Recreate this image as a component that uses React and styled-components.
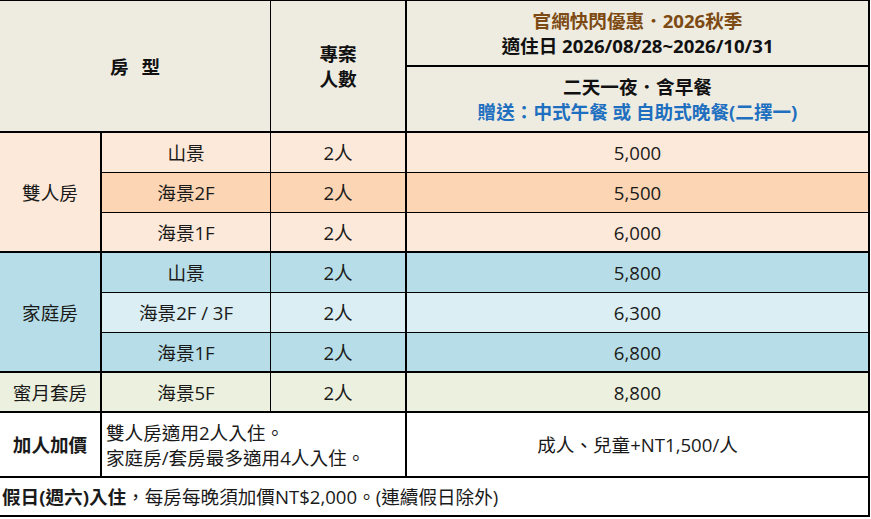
import React from "react";
import styled, { createGlobalStyle } from "styled-components";

const Global = createGlobalStyle`
  html, body { margin: 0; padding: 0; background: #fff; }
  body {
    font-family: "Open Sans", "Noto Sans CJK TC", sans-serif;
    color: #1a1a1a;
  }
`;

const C = {
  head: "#EEECE1",
  peach: "#FDE9D9",
  peachDark: "#FCD5B4",
  blue: "#B7DEE8",
  blueLight: "#DAEEF3",
  olive: "#EBF1DE",
  white: "#FFFFFF",
};

const Grid = styled.div`
  display: grid;
  grid-template-columns: 102px 169px 136px 463px;
  grid-template-rows: 66px 66px repeat(7, 40px) 65px 39px;
  width: 870px;
  border-top: 1px solid #000;
`;

const Cell = styled.div`
  box-sizing: border-box;
  display: flex;
  flex-direction: column;
  justify-content: center;
  align-items: ${(p) => (p.$left ? "flex-start" : "center")};
  text-align: ${(p) => (p.$left ? "left" : "center")};
  padding: 0 0 0 ${(p) => p.$pl || 0}px;
  background: ${(p) => p.$bg || C.white};
  border-right: ${(p) => p.$r ?? 2}px solid #000;
  border-bottom: ${(p) => p.$b ?? 1}px solid #000;
  grid-column: span ${(p) => p.$cs || 1};
  grid-row: span ${(p) => p.$rs || 1};
  font-size: 18.6px;
  line-height: 25px;
  font-weight: ${(p) => (p.$bold ? 700 : 400)};
  white-space: nowrap;
`;

const HeadTitle = styled.span`
  color: ${(p) => p.$color || "#111"};
  font-weight: 700;
  word-spacing: ${(p) => p.$ws || "normal"};
`;

const Bold = styled.span`
  font-weight: 700;
`;

const groups = [
  {
    name: "雙人房",
    rows: [
      { view: "山景", price: "5,000", bg: C.peach },
      { view: "海景2F", price: "5,500", bg: C.peachDark },
      { view: "海景1F", price: "6,000", bg: C.peach },
    ],
    bg: C.peach,
  },
  {
    name: "家庭房",
    rows: [
      { view: "山景", price: "5,800", bg: C.blue },
      { view: "海景2F / 3F", price: "6,300", bg: C.blueLight },
      { view: "海景1F", price: "6,800", bg: C.blue },
    ],
    bg: C.blue,
  },
  {
    name: "蜜月套房",
    rows: [{ view: "海景5F", price: "8,800", bg: C.olive }],
    bg: C.olive,
  },
];

export default function App() {
  return (
    <>
      <Global />
      <Grid>
        <Cell $bg={C.head} $cs={2} $rs={2} $r={1} $b={2}>
          <HeadTitle $ws="8px">房 型</HeadTitle>
        </Cell>
        <Cell $bg={C.head} $rs={2} $b={2}>
          <HeadTitle>專案</HeadTitle>
          <HeadTitle>人數</HeadTitle>
        </Cell>
        <Cell $bg={C.head} $b={2}>
          <HeadTitle $color="#7C4A12">官網快閃優惠．2026秋季</HeadTitle>
          <HeadTitle>適住日 2026/08/28~2026/10/31</HeadTitle>
        </Cell>
        <Cell $bg={C.head} $b={2}>
          <HeadTitle>二天一夜．含早餐</HeadTitle>
          <HeadTitle $color="#1E6FBF">贈送：中式午餐 或 自助式晚餐(二擇一)</HeadTitle>
        </Cell>

        {groups.map((g) => (
          <React.Fragment key={g.name}>
            <Cell $bg={g.bg} $rs={g.rows.length} $b={2}>
              {g.name}
            </Cell>
            {g.rows.map((r, i) => {
              const last = i === g.rows.length - 1;
              const b = last ? 2 : 1;
              return (
                <React.Fragment key={r.view}>
                  <Cell $bg={r.bg} $r={1} $b={b}>{r.view}</Cell>
                  <Cell $bg={r.bg} $b={b}>2人</Cell>
                  <Cell $bg={r.bg} $b={b}>{r.price}</Cell>
                </React.Fragment>
              );
            })}
          </React.Fragment>
        ))}

        <Cell $b={2} $bold>加人加價</Cell>
        <Cell $cs={2} $b={2} $left $pl={4}>
          <span>雙人房適用2人入住。</span>
          <span>家庭房/套房最多適用4人入住。</span>
        </Cell>
        <Cell $b={2}>成人、兒童+NT1,500/人</Cell>

        <Cell $cs={4} $b={2} $left $pl={2}>
          <span>
            <Bold>假日(週六)入住</Bold>，每房每晚須加價NT$2,000。(連續假日除外)
          </span>
        </Cell>
      </Grid>
    </>
  );
}
